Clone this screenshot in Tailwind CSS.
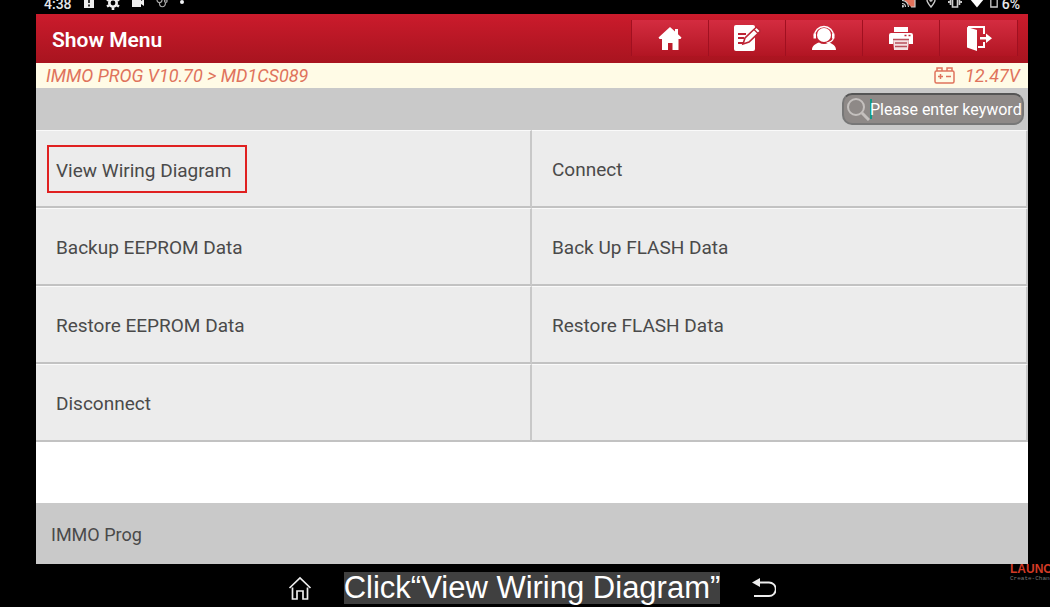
<!DOCTYPE html>
<html lang="en">
<head>
    <meta charset="UTF-8">
    <meta name="viewport" content="width=device-width, initial-scale=1.0">
    <title>Show Menu</title>
    <script src="https://cdn.jsdelivr.net/npm/@tailwindcss/browser@4"></script>
</head>
<body class="relative flex h-screen flex-col overflow-hidden bg-black pl-9 pr-[22px] font-['Roboto',sans-serif]">

    <!-- Android status bar -->
    <div class="flex h-3.5 shrink-0 items-end justify-between overflow-hidden pl-2 pr-2 text-sm leading-5 font-medium text-gray-200">
        <div class="flex items-end gap-3">
            <span>4:38</span>
            <svg class="mb-1.5 h-3 w-2.5" viewBox="0 0 10 12" fill="#eee"><path d="M0 0h10v12H0z"/><path d="M4 0h2v7H4zM4 8.500h2v2H4z" fill="#333"/></svg>
            <svg class="mb-1 h-3.5 w-3.5" viewBox="0 0 14 14"><circle cx="7" cy="7" r="3.700" fill="none" stroke="#eee" stroke-width="2.600"/><path d="M7 0v2.500M7 11.500V14M1 3.500l2 1.200M11 9.300l2 1.200M1 10.500l2-1.200M11 4.700l2-1.200" stroke="#eee" stroke-width="2.600"/></svg>
            <svg class="mb-1.5 h-3 w-3" viewBox="0 0 12 12" fill="#eee"><path d="M0 1h9v4l3-2v7L9 8v3H0z"/></svg>
            <svg class="mb-1.5 h-3 w-3" viewBox="0 0 12 12" fill="none" stroke="#aaa" stroke-width="1.200"><path d="M1 1v3a2.500 2.500 0 0 0 5 0V1M3.500 7c0 5 5.500 5 6 0"/><circle cx="9.800" cy="5" r="1.300"/></svg>
            <span class="mb-2.5 h-1 w-1 rounded-full bg-gray-100"></span>
        </div>
        <div class="flex items-end">
            <svg class="mb-1.5 mr-2.5 h-3 w-3.5" viewBox="0 0 14 12" fill="none" stroke="#ccc" stroke-width="1.200"><path d="M1 3V1h12v10H9" fill="#e2725b"/><path d="M0 4.500A6.500 6.500 0 0 1 6.500 11M0 7.500A3.500 3.500 0 0 1 3.500 11"/><circle cx=".8" cy="10.300" r=".6"/></svg>
            <svg class="mb-1.5 mr-3 h-3 w-2.5" viewBox="0 0 10 12" fill="none" stroke="#ccc" stroke-width="1.400"><path d="M5 11C2.500 8 1 6 1 4a4 4 0 0 1 8 0c0 2-1.500 4-4 7z"/><circle cx="5" cy="4" r="1"/></svg>
            <svg class="mb-1.5 mr-2 h-3 w-3.5" viewBox="0 0 14 12" fill="none" stroke="#ccc" stroke-width="1.600"><path d="M4.500 1h5v10h-5zM2.500 3v6M11.500 3v6M.8 5v2M13.200 5v2"/></svg>
            <svg class="mb-1.5 mr-1.5 h-3 w-3.5" viewBox="0 0 14 12" fill="#fff"><path d="M0 3q7-6 14 0L7 11.500z"/></svg>
            <svg class="mb-1.5 mr-1 h-3 w-2" viewBox="0 0 8 12" fill="none" stroke="#ccc" stroke-width="1.300"><path d="M.8 1h6.400v10H.8z"/></svg>
            <span>6%</span>
        </div>
    </div>

    <!-- Title bar -->
    <header class="flex h-[49px] shrink-0 items-center justify-between bg-linear-to-b from-[#cb1b2c] to-[#a8141f] pl-4 pr-2.5">
        <h1 class="pt-0.5 text-[21px] leading-6 font-semibold text-white">Show Menu</h1>
        <nav class="mb-0.5 flex h-9 divide-x divide-[#a01020] border-x border-[#a01020] bg-linear-to-b from-[#d42c40] to-[#b21523]">
            <button type="button" aria-label="Home" class="flex w-[77px] items-center justify-center">
                <svg class="h-7 w-7" viewBox="0 0 28 28" fill="#fff"><path d="M14 3l5 4.500V5h3v5.200l3.500 3.300-1 1.500H22.500v11h-6v-7h-4.500v7h-6V15H3.500l-1-1.500z"/></svg>
            </button>
            <button type="button" aria-label="Feedback" class="flex w-[77px] items-center justify-center">
                <svg class="h-7 w-7" viewBox="0 0 28 28" fill="none"><rect x="1" y="1" width="21" height="26" rx="2" fill="#fff"/><path d="M5 10h8M5 14h6M5 19h6" stroke="#bd2435" stroke-width="1.800"/><path d="M10 20l2-6L23.500 3l4 4L16 18z" fill="#fff" stroke="#bd2435" stroke-width="1.600"/><path d="M21 5.500l4 4" stroke="#bd2435" stroke-width="1.300"/></svg>
            </button>
            <button type="button" aria-label="Support" class="flex w-[77px] items-center justify-center">
                <svg class="h-7 w-7" viewBox="0 0 28 28" fill="#fff"><circle cx="14" cy="11" r="7"/><path d="M4.500 12a9.500 9.500 0 0 1 19 0" fill="none" stroke="#fff" stroke-width="1.500"/><path d="M3.500 9.500H6v5H3.500zM22 9.500h2.500v5H22zM2 26c0-4 3-6 7-7.500q5 3 10 0c4 1.500 7 3.500 7 7.500z"/><path d="M23.500 14q-1 4-7 5" fill="none" stroke="#fff" stroke-width="1.200"/></svg>
            </button>
            <button type="button" aria-label="Print" class="flex w-[77px] items-center justify-center">
                <svg class="h-7 w-7" viewBox="0 0 28 28" fill="#fff"><path d="M7 3h14v5H7zM4 9h20a2 2 0 0 1 2 2v9h-4v-5H6v5H2v-9a2 2 0 0 1 2-2z"/><path d="M6 15h16l-1 11H7z" fill="#f4dfe1"/><path d="M6 15.500h16M8 19h12M8 22.500h12" stroke="#b8505c" stroke-width="1.300"/><path d="M17.500 11.500h2M21.500 11.500h2" stroke="#bd2435" stroke-width="1.500"/></svg>
            </button>
            <button type="button" aria-label="Exit" class="flex w-[77px] items-center justify-center">
                <svg class="h-7 w-7" viewBox="0 0 28 28" fill="#fff"><path d="M2 3l10 3v21L2 23.500z"/><path d="M3 3h16v7M13 23h6v-5" fill="none" stroke="#fff" stroke-width="2"/><path d="M15 13h6V9.500l6 4.700-6 4.800v-3.500h-6z"/></svg>
            </button>
        </nav>
    </header>

    <!-- Software path and battery voltage -->
    <div class="flex h-[25px] shrink-0 items-center justify-between bg-[#fffbe6] pl-2.5 pr-2 text-lg leading-6 text-[#e0735c] italic">
        <p>IMMO PROG V10.70 &gt; MD1CS089</p>
        <div class="flex items-center gap-2.5">
            <svg class="h-[17px] w-[21px]" viewBox="0 0 21 17" fill="none" stroke="#e0735c" stroke-width="1.500"><rect x="1" y="4" width="19" height="12" rx="1.500"/><path d="M3 4V1h5v3M13 4V1h5v3M4 9.500h5M6.500 7v5M12 9.500h5"/></svg>
            <span>12.47V</span>
        </div>
    </div>

    <!-- Search -->
    <div class="flex h-[42px] shrink-0 items-center justify-end bg-[#c9c9c9] pr-1">
        <label class="flex h-8 w-[182px] items-center rounded-[10px] border-2 border-[#777] border-t-[#555] bg-[#8e8987] pl-0.5">
            <svg class="h-6 w-6 shrink-0" viewBox="0 0 24 24" fill="none" stroke="#c4c0be"><circle cx="10" cy="10" r="8" stroke-width="2"/><path d="M16 16l7 7" stroke-width="3"/></svg>
            <span class="h-5 w-0.5 shrink-0 bg-[#159a87]"></span>
            <input type="text" aria-label="Search" placeholder="Please enter keyword" class="-ml-0.5 min-w-0 flex-1 pt-0.5 text-base text-white outline-none placeholder:text-white">
        </label>
    </div>

    <!-- Function list -->
    <main class="flex-1 bg-white">
        <div class="grid auto-rows-[78px] grid-cols-2 bg-[#ececec] text-[19px] text-[#4a4a4a] *:border-t *:border-r-2 *:border-b-2 *:border-t-[#fafafa] *:border-r-[#c8c8c8] *:border-b-[#c2c2c2]">
            <button type="button" class="flex items-center pl-[11px] text-left">
                <span class="border-2 border-[#e02020] pt-2 pr-3.5 pb-1 pl-[7px] leading-8">View Wiring Diagram</span>
            </button>
            <button type="button" class="pt-1 pl-5 text-left">Connect</button>
            <button type="button" class="pt-1 pl-5 text-left">Backup EEPROM Data</button>
            <button type="button" class="pt-1 pl-5 text-left">Back Up FLASH Data</button>
            <button type="button" class="pt-1 pl-5 text-left">Restore EEPROM Data</button>
            <button type="button" class="pt-1 pl-5 text-left">Restore FLASH Data</button>
            <button type="button" class="pt-1 pl-5 text-left">Disconnect</button>
            <div></div>
        </div>
    </main>

    <footer class="flex h-[61px] shrink-0 items-center bg-[#c9c9c9] pl-[15px] pt-0.5 text-lg text-[#4a4a4a]">IMMO Prog</footer>

    <!-- Navigation bar and caption -->
    <div class="flex h-[43px] shrink-0 items-center justify-center gap-8 pt-1">
        <button type="button" aria-label="Home">
            <svg class="h-6 w-6" viewBox="0 0 24 24" fill="none" stroke="#eee" stroke-width="1.700"><path d="M1.500 12L12 2l10.500 10M4.500 11.500V23H9v-8h6v8h4.500V11.500"/></svg>
        </button>
        <p class="bg-[#404040] font-['Liberation_Sans',sans-serif] text-[31px] leading-8 whitespace-nowrap text-white">Click“View Wiring Diagram”</p>
        <button type="button" aria-label="Back">
            <svg class="h-6 w-6" viewBox="0 0 24 24" fill="none" stroke="#eee" stroke-width="1.800"><path d="M7 6.500h10a6 6 0 0 1 0 13.500H2"/><path d="M0 6.500L8 2v9z" fill="#eee" stroke="none"/></svg>
        </button>
    </div>

    <!-- Brand watermark, runs off the right edge -->
    <div class="absolute bottom-6 left-[1010px] font-['Liberation_Sans',sans-serif] whitespace-nowrap">
        <p class="text-xs leading-3 font-bold text-[#d23a25]">LAUNCH</p>
        <p class="font-['Liberation_Mono',monospace] text-[6px] leading-2 text-[#777]">Create-Change</p>
    </div>

</body>
</html>
